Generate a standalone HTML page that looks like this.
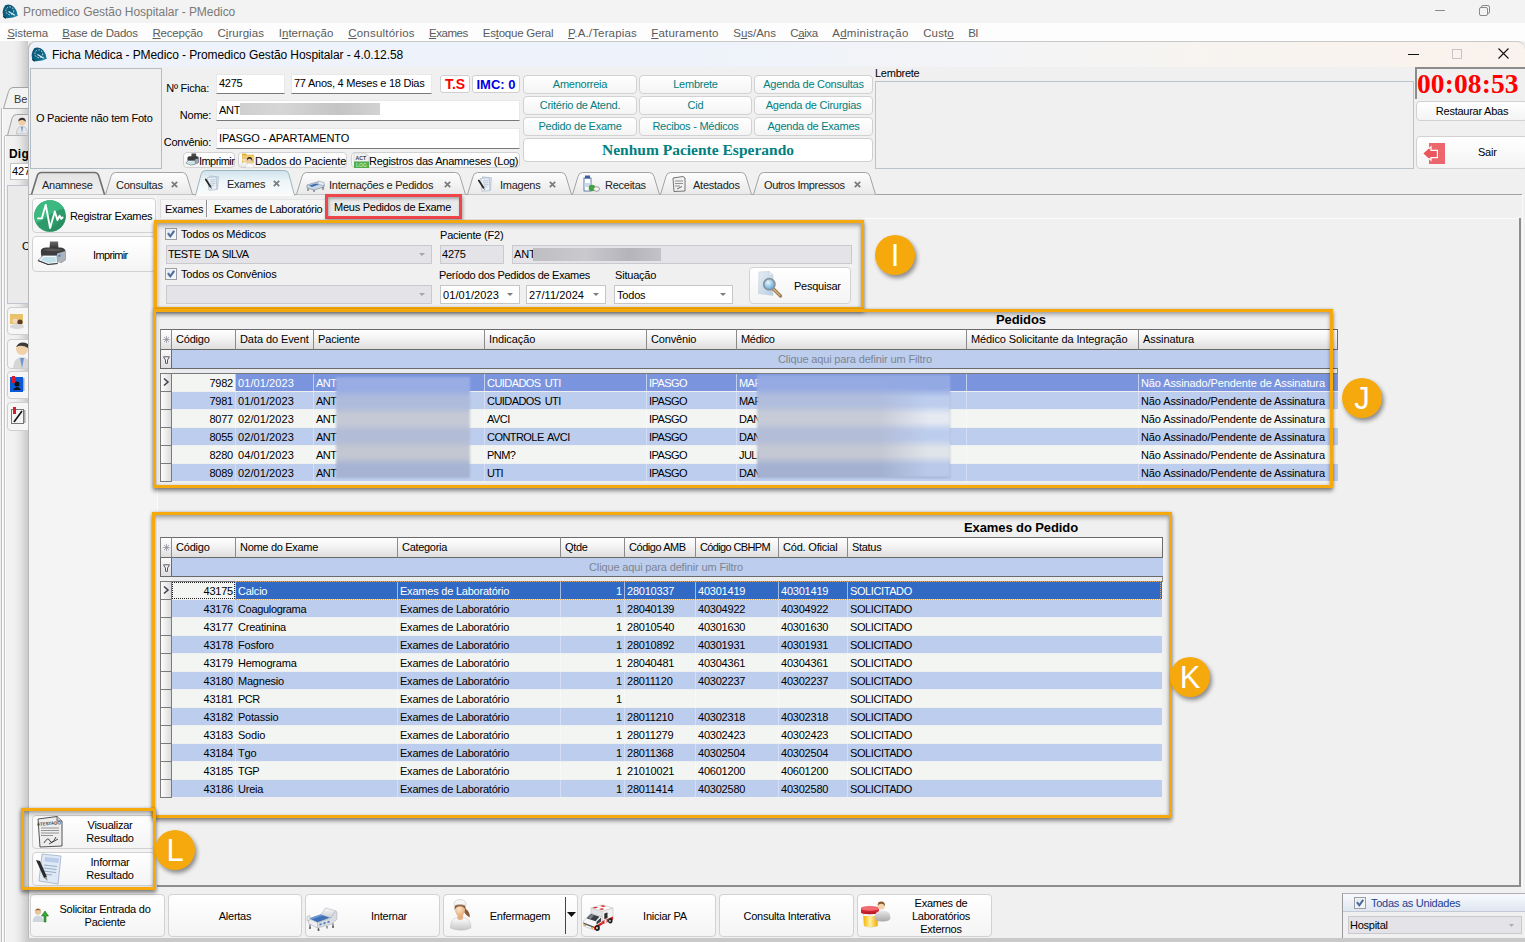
<!DOCTYPE html><html><head><meta charset="utf-8"><title>Promedico Gestão Hospitalar - PMedico</title><style>
*{box-sizing:border-box}
html,body{margin:0;padding:0}
body{width:1525px;height:942px;position:relative;overflow:hidden;background:#f0f0f0;
 font-family:"Liberation Sans",sans-serif;font-size:11px;color:#000;line-height:13px}
div{position:absolute}
svg{position:absolute;overflow:visible}
.t{font-size:11px;letter-spacing:-0.2px}
.ms{font-size:11px;letter-spacing:-0.25px}
.btn{background:linear-gradient(#ffffff,#f4f4f4);border:1px solid #d2d2d2;border-radius:4px}
.hdr{background:linear-gradient(#ffffff 0%,#f3f3f3 45%,#dedede 100%);border:1px solid #6a6a6a;border-left-color:#8a8a8a;padding:3px 0 0 4px;font-size:11px;letter-spacing:-0.3px;white-space:nowrap;overflow:hidden}
.cell{white-space:nowrap;overflow:hidden;font-size:11px;letter-spacing:-0.22px;line-height:18px;height:18px}
.orange{z-index:5;border:3px solid #f6a90c;box-shadow:0 3px 4px rgba(0,0,0,.42), 0 0 3px rgba(0,0,0,.2), inset 0 3px 4px rgba(0,0,0,.28), inset 0 0 3px rgba(0,0,0,.15)}
.circ{z-index:6;width:40px;height:40px;border-radius:50%;background:#f6a90c;box-shadow:2px 3px 4px rgba(0,0,0,.42);color:#fff;font-size:31px;line-height:41px;text-align:center;overflow:hidden}
.inp{background:#fff;border-bottom:1px solid #7a7a7a;border-top:1px solid #e8e8e8;border-left:1px solid #e8e8e8;border-right:1px solid #e8e8e8;padding:2px 0 0 2px;white-space:nowrap;overflow:hidden}
.dis{background:#e3e3e8;border:1px solid #c9c9ce;padding:2px 0 0 1px;white-space:nowrap;overflow:hidden}
.teal{color:#008080;text-align:center;line-height:17px}
.menu{font-size:12px;color:#5b5b5b;top:26px}
.menu u{text-decoration:underline}
</style></head><body>
<div style="left:0px;top:0px;width:1525px;height:23px;background:#f3f3f3"></div>
<svg style="left:2px;top:3.5px" width="16" height="16" viewBox="0 0 16 16"><defs><linearGradient id="lg2" x1="0" y1="0" x2="1" y2="1"><stop offset="0" stop-color="#0b4f6e"/><stop offset=".6" stop-color="#0e6686"/><stop offset="1" stop-color="#2391b5"/></linearGradient></defs><path d="M3.200 1.200 Q8.500 -.8 12.200 3.200 Q15.500 7 15.800 11.800 Q11 14.500 3.800 14.200 L1.200 12.200 Q-.5 6.500 3.200 1.200Z" fill="url(#lg2)"/><circle cx="7.800" cy="6.800" r="3.900" fill="none" stroke="#cfe6ee" stroke-width="1" stroke-dasharray="1.600 1.300"/><path d="M6.500 7.500 L12.800 11.200" stroke="#e6f3f7" stroke-width="1.100"/><path d="M1.300 12.300 L3.800 14.300" stroke="#072f42" stroke-width="1.300"/></svg>
<div style="left:23px;top:5px;white-space:nowrap;font-size:12px;color:#7a7a7a;line-height:15px;letter-spacing:-0.05px">Promedico Gestão Hospitalar - PMedico</div>
<div style="left:1435px;top:10px;width:10px;height:1px;background:#8a8a8a"></div>
<svg style="left:1479px;top:5px" width="11" height="11" viewBox="0 0 11 11"><rect x=".5" y="2.5" width="8" height="8" rx="1.5" fill="none" stroke="#8a8a8a"/><path d="M2.5 2.5 V2 a1.5 1.5 0 0 1 1.5 -1.5 H9 a1.5 1.5 0 0 1 1.5 1.5 V7 a1.5 1.5 0 0 1 -1.5 1.5" fill="none" stroke="#8a8a8a"/></svg>
<div style="left:0px;top:23px;width:1525px;height:18px;background:#fdfdfd"></div>
<div style="left:7.2px;top:26px;white-space:nowrap;font-size:11.500px;color:#5b5b5b;line-height:15px;letter-spacing:-0.08px"><u>S</u>istema</div>
<div style="left:62.3px;top:26px;white-space:nowrap;font-size:11.500px;color:#5b5b5b;line-height:15px;letter-spacing:-0.25px"><u>B</u>ase de Dados</div>
<div style="left:152.5px;top:26px;white-space:nowrap;font-size:11.500px;color:#5b5b5b;line-height:15px;letter-spacing:-0.2px"><u>R</u>ecepção</div>
<div style="left:217.4px;top:26px;white-space:nowrap;font-size:11.500px;color:#5b5b5b;line-height:15px;letter-spacing:0.06px">C<u>i</u>rurgias</div>
<div style="left:278.7px;top:26px;white-space:nowrap;font-size:11.500px;color:#5b5b5b;line-height:15px;letter-spacing:0.04px">I<u>n</u>ternação</div>
<div style="left:348.2px;top:26px;white-space:nowrap;font-size:11.500px;color:#5b5b5b;line-height:15px;letter-spacing:0.22px"><u>C</u>onsultórios</div>
<div style="left:428.9px;top:26px;white-space:nowrap;font-size:11.500px;color:#5b5b5b;line-height:15px;letter-spacing:-0.42px"><u>E</u>xames</div>
<div style="left:482.7px;top:26px;white-space:nowrap;font-size:11.500px;color:#5b5b5b;line-height:15px;letter-spacing:-0.22px">Es<u>t</u>oque Geral</div>
<div style="left:568px;top:26px;white-space:nowrap;font-size:11.500px;color:#5b5b5b;line-height:15px;letter-spacing:0.15px"><u>P</u>.A./Terapias</div>
<div style="left:651.2px;top:26px;white-space:nowrap;font-size:11.500px;color:#5b5b5b;line-height:15px;letter-spacing:0.21px"><u>F</u>aturamento</div>
<div style="left:733.3px;top:26px;white-space:nowrap;font-size:11.500px;color:#5b5b5b;line-height:15px;letter-spacing:-0.03px">S<u>u</u>s/Ans</div>
<div style="left:790.3px;top:26px;white-space:nowrap;font-size:11.500px;color:#5b5b5b;line-height:15px;letter-spacing:-0.42px">C<u>a</u>ixa</div>
<div style="left:832.2px;top:26px;white-space:nowrap;font-size:11.500px;color:#5b5b5b;line-height:15px;letter-spacing:0.27px">A<u>d</u>ministração</div>
<div style="left:923.2px;top:26px;white-space:nowrap;font-size:11.500px;color:#5b5b5b;line-height:15px;letter-spacing:0.13px">Cust<u>o</u></div>
<div style="left:968.2px;top:26px;white-space:nowrap;font-size:11.500px;color:#5b5b5b;line-height:15px;letter-spacing:-0.69px">BI</div>
<div style="left:0px;top:42px;width:28px;height:900px;background:#f0f0f0"></div>
<div style="left:1px;top:108px;width:27px;height:834px;background:#f3f3f3;border-left:1px solid #bdbdbd;box-shadow:inset 1px 0 0 #fdfdfd"></div>
<div style="left:4px;top:136px;width:24px;height:806px;background:#f1f1f1;border-left:1px solid #c6c6c6;box-shadow:inset 1px 0 0 #fbfbfb"></div>
<div style="left:14px;top:41px;width:14px;height:901px;background:linear-gradient(90deg,rgba(0,0,0,0),rgba(0,0,0,.04) 40%,rgba(0,0,0,.16))"></div>
<svg style="left:3px;top:86px" width="27" height="23" viewBox="0 0 27 23"><path d="M.5 22.500 L5.500 5.500 Q6.500 1.500 10 1.500 H27 V22.500 Z" fill="#f3f3f3" stroke="#a3a3a3"/></svg>
<div style="left:14px;top:93px;white-space:nowrap;font-size:11px;color:#333">Be</div>
<div style="left:3px;top:108px;width:26px;height:1px;background:#a9a9a9"></div>
<svg style="left:7px;top:113px" width="23" height="23" viewBox="0 0 23 23"><path d="M.5 22.500 L5 5.500 Q6 1.500 9.500 1.500 H23 V22.500 Z" fill="#ebebeb" stroke="#a3a3a3"/><path d="M9.500 21 Q9.500 13.500 15 13.500 Q20.500 13.500 20.500 21Z" fill="#e4e6ea" stroke="#9aa0a8" stroke-width=".5"/><path d="M14 14 L15 20 L16 14Z" fill="#6d93cc"/><circle cx="15" cy="9" r="3.600" fill="#efcfa8"/><path d="M11.300 8.500 Q11.500 4.500 15.500 4.800 Q19 5 18.600 9 Q17.500 6.800 15 7 Q12.500 6.800 11.300 8.500Z" fill="#3a3230"/></svg>
<div style="left:5px;top:135px;width:24px;height:1px;background:#b5b5b5"></div>
<div style="left:9px;top:148px;white-space:nowrap;font-weight:bold;font-size:12px;letter-spacing:.2px">Dig</div>
<div style="left:10px;top:163px;width:20px;height:17px;background:#fff;border:1px solid #c4c4c4"></div>
<div style="left:12px;top:165px;white-space:nowrap;font-size:11px">427</div>
<div style="left:7px;top:185px;width:23px;height:119px;background:#eaeaea;border:1px solid #bfc5d0"></div>
<div style="left:22px;top:240px;white-space:nowrap;font-size:11px">C</div>
<div style="left:7px;top:307px;width:24px;height:28px;background:#f6f6f6;border:1px solid #cfcfcf;border-radius:4px"></div>
<div style="left:7px;top:339px;width:24px;height:30px;background:#f6f6f6;border:1px solid #cfcfcf;border-radius:4px"></div>
<div style="left:7px;top:371px;width:24px;height:28px;background:#f6f6f6;border:1px solid #cfcfcf;border-radius:4px"></div>
<div style="left:7px;top:402px;width:24px;height:29px;background:#f6f6f6;border:1px solid #cfcfcf;border-radius:4px"></div>
<svg style="left:9px;top:312px" width="18" height="18" viewBox="0 0 18 18"><rect x="1" y="2" width="13" height="10" fill="#e9c36a"/><circle cx="6" cy="9" r="2.6" fill="#f1d7b8"/><circle cx="11" cy="10" r="2.6" fill="#5a4030"/><ellipse cx="8" cy="14.5" rx="7" ry="2.5" fill="#d9d9d9"/></svg>
<svg style="left:12px;top:340px" width="18" height="30" viewBox="0 0 18 30"><circle cx="10" cy="9" r="6" fill="#f0d0a8"/><path d="M4 7 Q8 0 16 4 L16 8 Q10 4 4 7Z" fill="#3a3a3a"/><path d="M1 28 Q2 17 10 17 Q18 17 18 28Z" fill="#d6d6d6"/><path d="M8 18 L10 28 L12 18Z" fill="#6b95d0"/></svg>
<svg style="left:10px;top:376px" width="15" height="18" viewBox="0 0 15 18"><rect x="0" y="1" width="13" height="15" fill="#0a5ad8"/><rect x="2" y="0" width="3" height="7" fill="#d91a2a"/><circle cx="7" cy="8" r="2.5" fill="#111"/><path d="M3 14 Q7 8 11 14Z" fill="#111"/><rect x="13" y="2" width="1.5" height="13" fill="#aaa"/></svg>
<svg style="left:11px;top:407px" width="15" height="18" viewBox="0 0 15 18"><rect x="0.5" y="2.500" width="12" height="14" fill="#f4f4f4" stroke="#777"/><rect x="2" y="0" width="3" height="7" fill="#d91a2a"/><path d="M3 15 L11 4" stroke="#111" stroke-width="1.6"/><rect x="13" y="3" width="1.5" height="13" fill="#aaa"/></svg>
<div style="left:28px;top:41px;width:1497px;height:901px;background:#f0f0f0;border-left:1px solid #b8b8b8;border-top-left-radius:8px;border-top-right-radius:8px"></div>
<div style="left:28px;top:41px;width:1497px;height:26px;background:linear-gradient(90deg,#eef2fb 0%,#eef2fa 45%,#f3f4f7 63%,#f7f4f1 78%,#faf2ec 100%);border-top-left-radius:8px;border-top-right-radius:8px;border-top:1px solid #c9c9c9;border-left:1px solid #b8b8b8"></div>
<svg style="left:31px;top:46.5px" width="16" height="16" viewBox="0 0 16 16"><defs><linearGradient id="lg31" x1="0" y1="0" x2="1" y2="1"><stop offset="0" stop-color="#0b4f6e"/><stop offset=".6" stop-color="#0e6686"/><stop offset="1" stop-color="#2391b5"/></linearGradient></defs><path d="M3.200 1.200 Q8.500 -.8 12.200 3.200 Q15.500 7 15.800 11.800 Q11 14.500 3.800 14.200 L1.200 12.200 Q-.5 6.500 3.200 1.200Z" fill="url(#lg31)"/><circle cx="7.800" cy="6.800" r="3.900" fill="none" stroke="#cfe6ee" stroke-width="1" stroke-dasharray="1.600 1.300"/><path d="M6.500 7.500 L12.800 11.200" stroke="#e6f3f7" stroke-width="1.100"/><path d="M1.300 12.300 L3.800 14.300" stroke="#072f42" stroke-width="1.300"/></svg>
<div style="left:52px;top:48px;white-space:nowrap;font-size:12px;line-height:15px;letter-spacing:-0.09px">Ficha Médica - PMedico - Promedico Gestão Hospitalar - 4.0.12.58</div>
<div style="left:1408px;top:54px;width:11px;height:1px;background:#111"></div>
<div style="left:1452px;top:49px;width:10px;height:10px;border:1px solid #c4c4c4"></div>
<svg style="left:1498px;top:48px" width="11" height="11" viewBox="0 0 11 11"><path d="M0.5 .5 L10.5 10.500 M10.5 .5 L.5 10.5" stroke="#111" stroke-width="1.1"/></svg>
<div style="left:30px;top:68px;width:132px;height:101px;border:1px solid #b3bdca;background:#f0f0f0"></div>
<div class="ms" style="left:36px;top:112px;white-space:nowrap;">O Paciente não tem Foto</div>
<div class="ms" style="left:129px;top:82px;width:80px;text-align:right;white-space:nowrap">Nº Ficha:</div>
<div class="ms" style="left:131px;top:109px;width:80px;text-align:right;white-space:nowrap">Nome:</div>
<div class="ms" style="left:131px;top:136px;width:80px;text-align:right;white-space:nowrap">Convênio:</div>
<div class="inp ms" style="left:216px;top:74px;width:69px;height:20px;">4275</div>
<div class="inp ms" style="left:291px;top:74px;width:141px;height:20px;">77 Anos, 4 Meses e 18 Dias</div>
<div style="left:440px;top:75px;width:30px;height:18px;background:#fff;border:1px solid #cfcfcf;border-radius:3px;color:#f00;font-weight:bold;font-size:14px;line-height:17px;text-align:center">T.S</div>
<div style="left:472px;top:75px;width:48px;height:18px;background:#fff;border:1px solid #cfcfcf;border-radius:3px;color:#0000e6;font-weight:bold;font-size:13px;line-height:17px;text-align:center;white-space:nowrap">IMC: 0</div>
<div class="inp ms" style="left:216px;top:100px;width:304px;height:21px;padding-top:3px">ANT</div>
<div style="left:240px;top:103px;width:140px;height:12px;background:linear-gradient(90deg,#cfcfcf,#d6d6d6 30%,#c4c4c4 70%,#d2d2d2)"></div>
<div class="inp ms" style="left:216px;top:128px;width:304px;height:21px;padding-top:3px;letter-spacing:-0.1px">IPASGO - APARTAMENTO</div>
<div class="btn" style="left:183px;top:152px;width:52px;height:16px;"></div>
<div class="ms" style="left:199px;top:155px;white-space:nowrap;letter-spacing:-0.55px">Imprimir</div>
<svg style="left:185px;top:153px" width="14" height="13" viewBox="0 0 14 13"><path d="M6.500 .5 H11 L11.300 4 H6.300Z" fill="#4a4a4a"/><path d="M2.500 4.500 Q3 3.300 5 3.300 H12 Q13.600 3.500 13.700 5 V9.500 L11.500 11 L9.800 8.500 H3 Q2.200 6.500 2.500 4.500Z" fill="#3a3a3a"/><path d="M9.800 6.500 L13.700 5.300 V9.500 L11.500 11 L9.800 10.500Z" fill="#9aa3ab"/><path d="M3.500 7.500 H10 L10.200 11.300 L5.500 12 L.8 10Z" fill="#eef4f7" stroke="#59626a" stroke-width=".6"/><path d="M4 8.500 H9.300 L9.500 10.600 L5.500 11.200 L2.500 9.800Z" fill="#bfe1ea"/></svg>
<div class="btn" style="left:238px;top:152px;width:109px;height:16px;"></div>
<div class="ms" style="left:255px;top:155px;white-space:nowrap;letter-spacing:-0.1px">Dados do Paciente</div>
<svg style="left:240px;top:152px" width="15" height="16" viewBox="0 0 15 16"><path d="M2 1.500 H6 L7 2.800 H14 V11 H2Z" fill="#e3b044"/><path d="M2.500 3.500 H14.500 L13.500 11.500 H2Z" fill="#f3cf6e"/><circle cx="4.800" cy="7.300" r="2.300" fill="#f3dcc0"/><path d="M2.500 6.800 Q4.800 3.500 7.100 6.800 Q4.800 5.600 2.500 6.800Z" fill="#caa04a"/><path d="M1 14.500 Q1.300 10 4.800 10 Q8 10 8.500 14.500Z" fill="#f2f2f2" stroke="#c8c8c8" stroke-width=".4"/><circle cx="9.600" cy="8.300" r="2.500" fill="#e9c9a6"/><path d="M6.900 9 Q6.500 4.800 9.600 5 Q12.700 4.800 12.300 9.500 Q11.500 6.500 9.600 6.800 Q7.500 6.500 6.900 9Z" fill="#3a2a20"/><path d="M5.500 15.800 Q6 11.200 9.600 11.200 Q13.200 11.200 13.800 15.800Z" fill="#fafafa" stroke="#c0c0c0" stroke-width=".4"/></svg>
<div class="btn" style="left:351px;top:152px;width:169px;height:16px;"></div>
<div class="ms" style="left:369px;top:155px;white-space:nowrap;">Registros das Anamneses (Log)</div>
<svg style="left:354px;top:153px" width="15" height="15" viewBox="0 0 15 15"><path d="M0 0 H11.500 L15 3 V9 H0Z" fill="#f1f1f1" stroke="#c2c2c2" stroke-width=".5"/><path d="M11.500 0 V3 H15Z" fill="#dcdcdc"/><rect x="0" y="8.500" width="15" height="6.500" fill="#4fae4b"/><text x="6.800" y="6.600" font-size="5.200" font-weight="bold" text-anchor="middle" fill="#444" font-family="Liberation Sans,sans-serif">ACT</text><text x="7.500" y="14" font-size="5.200" font-weight="bold" text-anchor="middle" fill="#b9e6b6" font-family="Liberation Sans,sans-serif">LOG</text></svg>
<div class="btn teal ms" style="left:523px;top:75px;width:114px;height:19px;">Amenorreia</div>
<div class="btn teal ms" style="left:523px;top:96px;width:114px;height:19px;">Critério de Atend.</div>
<div class="btn teal ms" style="left:523px;top:117px;width:114px;height:19px;">Pedido de Exame</div>
<div class="btn teal ms" style="left:639px;top:75px;width:113px;height:19px;">Lembrete</div>
<div class="btn teal ms" style="left:639px;top:96px;width:113px;height:19px;">Cid</div>
<div class="btn teal ms" style="left:639px;top:117px;width:113px;height:19px;">Recibos - Médicos</div>
<div class="btn teal ms" style="left:754px;top:75px;width:119px;height:19px;">Agenda de Consultas</div>
<div class="btn teal ms" style="left:754px;top:96px;width:119px;height:19px;">Agenda de Cirurgias</div>
<div class="btn teal ms" style="left:754px;top:117px;width:119px;height:19px;">Agenda de Exames</div>
<div style="left:523px;top:138px;width:350px;height:24px;background:#fff;border:1px solid #d0d0d0;border-radius:4px;text-align:center;font-family:'Liberation Serif',serif;font-weight:bold;font-size:15.5px;line-height:22px;color:#008080">Nenhum Paciente Esperando</div>
<div class="ms" style="left:875px;top:67px;white-space:nowrap;">Lembrete</div>
<div style="left:875px;top:81px;width:539px;height:88px;background:#f0f0f0;border:1px solid #bcc3cc"></div>
<div style="left:1415px;top:67px;width:110px;height:32px;border-left:2px solid #8c8c8c;border-top:2px solid #8c8c8c;background:#f0f0f0"></div>
<div style="left:1417px;top:68px;white-space:nowrap;font-family:'Liberation Serif',serif;font-weight:bold;font-size:27.500px;line-height:31px;color:#f00;letter-spacing:.1px">00:08:53</div>
<div class="btn ms" style="left:1416px;top:101px;width:112px;height:20px;text-align:center;line-height:18px">Restaurar Abas</div>
<div class="btn" style="left:1416px;top:136px;width:112px;height:33px;"></div>
<div class="ms" style="left:1478px;top:146px;white-space:nowrap;">Sair</div>
<svg style="left:1422px;top:142px" width="24" height="23" viewBox="0 0 24 23"><rect x="7" y="1" width="16" height="21" fill="#ec676c"/><path d="M1.300 11.400 L9 4.700 V8.400 H15.400 V15.700 H9 V18.100Z" fill="#e9565c" stroke="#fff" stroke-width="1.200" stroke-linejoin="miter"/><path d="M1.300 11.400 L7 6.400 V16.500Z" fill="#e9565c"/></svg>
<svg style="left:0;top:0" width="1525" height="200" viewBox="0 0 1525 200"><defs><linearGradient id="tg" x1="0" y1="0" x2="0" y2="1"><stop offset="0" stop-color="#fdfdfd"/><stop offset="1" stop-color="#e9e9e9"/></linearGradient><linearGradient id="ta" x1="0" y1="0" x2="0" y2="1"><stop offset="0" stop-color="#cfe3ec"/><stop offset=".45" stop-color="#eef6f9"/><stop offset="1" stop-color="#fbfbfb"/></linearGradient><linearGradient id="tp" x1="0" y1="0" x2="0" y2="1"><stop offset="0" stop-color="#e2e2e2"/><stop offset="1" stop-color="#f2f2f2"/></linearGradient></defs>
<path d="M29 194.5 H1522" stroke="#a3a3a3"/>
<path d="M105.5 194.5 L111.0 176.5 Q112.0 172.5 115.5 172.5 H182.5 Q186.0 172.5 187.0 176.5 L192.5 194.5" fill="url(#tg)" stroke="#a3a3a3" stroke-width="1"/>
<path d="M296.5 194.5 L302.0 176.5 Q303.0 172.5 306.5 172.5 H455.5 Q459.0 172.5 460.0 176.5 L465.5 194.5" fill="url(#tg)" stroke="#a3a3a3" stroke-width="1"/>
<path d="M467.5 194.5 L473.0 176.5 Q474.0 172.5 477.5 172.5 H561.5 Q565.0 172.5 566.0 176.5 L571.5 194.5" fill="url(#tg)" stroke="#a3a3a3" stroke-width="1"/>
<path d="M572.5 194.5 L578.0 176.5 Q579.0 172.5 582.5 172.5 H649.5 Q653.0 172.5 654.0 176.5 L659.5 194.5" fill="url(#tg)" stroke="#a3a3a3" stroke-width="1"/>
<path d="M660.5 194.5 L666.0 176.5 Q667.0 172.5 670.5 172.5 H741.5 Q745.0 172.5 746.0 176.5 L751.5 194.5" fill="url(#tg)" stroke="#a3a3a3" stroke-width="1"/>
<path d="M753.5 194.5 L759.0 176.5 Q760.0 172.5 763.5 172.5 H865.5 Q869.0 172.5 870.0 176.5 L875.5 194.5" fill="url(#tg)" stroke="#a3a3a3" stroke-width="1"/>
<path d="M31.5 194.5 L37.0 176.5 Q38.0 172.5 41.5 172.5 H94.5 Q98.0 172.5 99.0 176.5 L104.5 194.5" fill="url(#tp)" stroke="#6f6f6f" stroke-width="1.6"/>
<path d="M195.5 195.5 L201.0 174.5 Q202.0 170.5 205.5 170.5 H284.5 Q288.0 170.5 289.0 174.5 L294.5 195.5" fill="url(#ta)" stroke="#9fb5bf" stroke-width="1"/>
<path d="M196.5 195 H293.500" stroke="#fbfbfb" stroke-width="2"/>
</svg>
<div class="ms" style="left:42px;top:179px;white-space:nowrap;color:#222">Anamnese</div>
<div class="ms" style="left:116px;top:179px;white-space:nowrap;color:#222">Consultas</div>
<svg style="left:171px;top:181px" width="7" height="7" viewBox="0 0 7 7"><path d="M.8 .8 L6.200 6.200 M6.200 .8 L.8 6.200" stroke="#7a7a7a" stroke-width="1.700"/></svg>
<div class="ms" style="left:227px;top:178px;white-space:nowrap;color:#222">Exames</div>
<svg style="left:273px;top:179.5px" width="7" height="7" viewBox="0 0 7 7"><path d="M.8 .8 L6.200 6.200 M6.200 .8 L.8 6.200" stroke="#7a7a7a" stroke-width="1.700"/></svg>
<div class="ms" style="left:329px;top:179px;white-space:nowrap;color:#222">Internações e Pedidos</div>
<svg style="left:444px;top:181px" width="7" height="7" viewBox="0 0 7 7"><path d="M.8 .8 L6.200 6.200 M6.200 .8 L.8 6.200" stroke="#7a7a7a" stroke-width="1.700"/></svg>
<div class="ms" style="left:500px;top:179px;white-space:nowrap;color:#222">Imagens</div>
<svg style="left:549px;top:181px" width="7" height="7" viewBox="0 0 7 7"><path d="M.8 .8 L6.200 6.200 M6.200 .8 L.8 6.200" stroke="#7a7a7a" stroke-width="1.700"/></svg>
<div class="ms" style="left:605px;top:179px;white-space:nowrap;color:#222">Receitas</div>
<div class="ms" style="left:693px;top:179px;white-space:nowrap;color:#222">Atestados</div>
<div class="ms" style="left:764px;top:179px;white-space:nowrap;color:#222;letter-spacing:-0.38px">Outros Impressos</div>
<svg style="left:854px;top:181px" width="7" height="7" viewBox="0 0 7 7"><path d="M.8 .8 L6.200 6.200 M6.200 .8 L.8 6.200" stroke="#7a7a7a" stroke-width="1.700"/></svg>
<svg style="left:205px;top:174.5px" width="15" height="16" viewBox="0 0 15 16"><path d="M4.500 .8 L13.500 1.800 L12.500 14 L3.500 13Z" fill="#d3dfec" stroke="#a9b8c9" stroke-width=".6"/><path d="M2.500 2.500 L11 1.800 L12 14.500 L4 15.300Z" fill="#e9f0f7" stroke="#9fb0c3" stroke-width=".6"/><path d="M5 5 L10 4.600 M5.200 7 L10.200 6.600 M5.400 9 L10.400 8.600 M5.600 11 L9 10.700" stroke="#a5b5c8" stroke-width=".7"/><path d="M.8 4.500 L5.500 11.800" stroke="#222" stroke-width="1.700" stroke-linecap="round"/><path d="M5.500 11.800 L6.800 13.800" stroke="#777" stroke-width="1"/></svg>
<svg style="left:478px;top:175.5px" width="15" height="16" viewBox="0 0 15 16"><path d="M4.500 .8 L13.500 1.800 L12.500 14 L3.500 13Z" fill="#d3dfec" stroke="#a9b8c9" stroke-width=".6"/><path d="M2.500 2.500 L11 1.800 L12 14.500 L4 15.300Z" fill="#e9f0f7" stroke="#9fb0c3" stroke-width=".6"/><path d="M5 5 L10 4.600 M5.200 7 L10.200 6.600 M5.400 9 L10.400 8.600 M5.600 11 L9 10.700" stroke="#a5b5c8" stroke-width=".7"/><path d="M.8 4.500 L5.500 11.800" stroke="#222" stroke-width="1.700" stroke-linecap="round"/><path d="M5.500 11.800 L6.800 13.800" stroke="#777" stroke-width="1"/></svg>
<svg style="left:306px;top:178px" width="19" height="14" viewBox="0 0 19 14"><path d="M1 7 L11 4 L18 6 L18 9 L8 12 L1 10Z" fill="#c9d6e6" stroke="#7d8da3" stroke-width=".7"/><path d="M3 7.500 L10 5.500 L13 6.500 L6 9Z" fill="#3f6fb0"/><path d="M12 3 L18 4.500 V8 L12 6Z" fill="#e8eef5" stroke="#8a98aa" stroke-width=".6"/><path d="M2 10.500 V13 M8 12 V14 M17 9 V12" stroke="#555" stroke-width="1"/></svg>
<svg style="left:583px;top:175px" width="17" height="18" viewBox="0 0 17 18"><rect x="1" y="3" width="7" height="13" fill="#fff" stroke="#3b5f9a" stroke-width=".8"/><rect x="2" y="0.500" width="5" height="3" fill="#3b5f9a"/><rect x="1.500" y="8" width="6" height="4" fill="#c8d8ee"/><circle cx="9" cy="13" r="3.300" fill="#3fa33f"/><ellipse cx="13.500" cy="14" rx="3" ry="2.300" fill="#f4f4f4" stroke="#777" stroke-width=".7"/></svg>
<svg style="left:672px;top:176px" width="14" height="16" viewBox="0 0 14 16"><path d="M1 2 L11 .5 L13 2 V15 L2 15.500Z" fill="#f1f1f1" stroke="#666" stroke-width=".9"/><path d="M3 5 H11 M3 7.500 H11 M3 10 H8" stroke="#777" stroke-width=".8"/><path d="M5 13 L10 10.500" stroke="#444" stroke-width=".8"/></svg>
<div style="left:29px;top:195px;width:128px;height:694px;background:#f4f4f4"></div>
<div style="left:157px;top:218px;width:1px;height:592px;background:#fbfbfb"></div>
<div style="left:158px;top:218px;width:1362px;height:1px;background:#fbfbfb"></div>
<div style="left:1519px;top:218px;width:2px;height:668px;background:#8d8d8d"></div>
<div style="left:157px;top:885px;width:1364px;height:2px;background:#8d8d8d"></div>
<div style="left:1522px;top:195px;width:1px;height:695px;background:#fafafa"></div>
<div class="btn" style="left:32px;top:198px;width:124px;height:35px;"></div>
<svg style="left:34px;top:200px" width="32" height="32" viewBox="0 0 32 32"><defs><clipPath id="gc"><circle cx="16" cy="16" r="15.800"/></clipPath></defs><circle cx="16" cy="16" r="15.800" fill="#2e9a69"/><g clip-path="url(#gc)"><path d="M-2 -2 H34 V8 Q22 9 14 16 Q7 22 -2 24Z" fill="#3cb881"/><path d="M8 32 Q20 30 32 14 V34 H8Z" fill="#27875b" opacity=".6"/></g><path d="M4 18.400 H7.800 L11.700 4.800 L16.100 28 L20.800 11.500 L23.400 20 L25.600 15.800 L27.300 18.800 L28.600 17.500" fill="none" stroke="#fbfffd" stroke-width="1.900" stroke-linejoin="round" stroke-linecap="round"/></svg>
<div class="ms" style="left:70px;top:210px;white-space:nowrap;letter-spacing:-0.33px">Registrar Exames</div>
<div class="btn" style="left:32px;top:236px;width:124px;height:36px;"></div>
<div class="ms" style="left:93px;top:248.5px;white-space:nowrap;letter-spacing:-0.65px">Imprimir</div>
<svg style="left:34px;top:241px" width="30" height="24" viewBox="0 0 30 24"><defs><linearGradient id="pr1" x1="0" y1="0" x2="0" y2="1"><stop offset="0" stop-color="#6a6a6a"/><stop offset="1" stop-color="#2e2e2e"/></linearGradient></defs><path d="M16 .5 H24 L24.500 8 H15.500Z" fill="url(#pr1)"/><path d="M7 9 Q8 6.500 12 6.500 H27 Q31 7 31.500 10 V19 L27 22 L23 16.500 H8 Q6.500 13 7 9Z" fill="#3d3d3d"/><path d="M9 9 Q16 6 29 9 Q22 11.500 9 9Z" fill="#5a5a5a"/><path d="M23 12.500 L31.500 10 V19 L27 22 L23 21Z" fill="#aab3bb"/><path d="M24.500 14 L26.500 13.500 V15.500 L24.500 16Z" fill="#3a78d8"/><path d="M9 14.500 H23 L23.500 22.500 L14 23.500 L4 19.500Z" fill="#f4f8fa" stroke="#7a8288" stroke-width=".7"/><path d="M10 16 H21.500 L22 21 L14 22 L7 19Z" fill="#bfe1ea"/><path d="M4 19.500 L14 23.500 L23.500 22.500" fill="none" stroke="#333" stroke-width="1.200"/></svg>
<div style="left:160px;top:199px;width:166px;height:19px;background:#f5f5f5;border-left:1px solid #dcdcdc;border-top:1px solid #e6e6e6"></div>
<div class="ms" style="left:165px;top:203px;white-space:nowrap;">Exames</div>
<div style="left:206px;top:200px;width:1px;height:17px;background:#8f8f8f"></div>
<div style="left:207px;top:200px;width:1px;height:17px;background:#fdfdfd"></div>
<div class="ms" style="left:214px;top:203px;white-space:nowrap;">Exames de Laboratório</div>
<div style="left:325px;top:194px;width:137px;height:25px;border:3px solid #ef444a;background:#e9e9e9;box-shadow:1px 2px 3px rgba(0,0,0,.3), inset 1px 2px 3px rgba(0,0,0,.28);z-index:5"></div>
<div class="ms" style="left:334px;top:201px;white-space:nowrap;z-index:6">Meus Pedidos de Exame</div>
<div class="orange" style="left:154px;top:220px;width:710px;height:90px;"></div>
<div style="left:165px;top:228px;width:12px;height:12px;background:linear-gradient(135deg,#dfe5ee,#f8f9fb);border:1px solid #9a9ea4;box-shadow:inset 0 0 0 1px #f4f4f4"></div>
<svg style="left:167px;top:230px" width="8" height="8" viewBox="0 0 8 8"><path d="M.9 3.200 L3.300 6.300 L7.200 .9" fill="none" stroke="#4a6a9e" stroke-width="2"/></svg>
<div class="t" style="left:181px;top:228px;white-space:nowrap;">Todos os Médicos</div>
<div class="dis t" style="left:166px;top:245px;width:266px;height:19px;letter-spacing:-0.6px;word-spacing:1.500px">TESTE DA SILVA</div>
<svg style="left:419px;top:253px" width="6" height="3" viewBox="0 0 6 3"><path d="M0 0 H6 L3 3Z" fill="#a5a5a5"/></svg>
<div style="left:165px;top:268px;width:12px;height:12px;background:linear-gradient(135deg,#dfe5ee,#f8f9fb);border:1px solid #9a9ea4;box-shadow:inset 0 0 0 1px #f4f4f4"></div>
<svg style="left:167px;top:270px" width="8" height="8" viewBox="0 0 8 8"><path d="M.9 3.200 L3.300 6.300 L7.200 .9" fill="none" stroke="#4a6a9e" stroke-width="2"/></svg>
<div class="t" style="left:181px;top:268px;white-space:nowrap;">Todos os Convênios</div>
<div class="dis t" style="left:166px;top:285px;width:266px;height:19px;"></div>
<svg style="left:419px;top:293px" width="6" height="3" viewBox="0 0 6 3"><path d="M0 0 H6 L3 3Z" fill="#a5a5a5"/></svg>
<div class="t" style="left:440px;top:229px;white-space:nowrap;">Paciente (F2)</div>
<div class="dis t" style="left:440px;top:245px;width:64px;height:19px;">4275</div>
<div class="dis t" style="left:512px;top:245px;width:340px;height:19px;">ANT</div>
<div style="left:533px;top:248px;width:128px;height:13px;background:linear-gradient(90deg,#bdbdc2,#c9c9ce 40%,#b4b4ba 75%,#c2c2c8)"></div>
<div class="t" style="left:439px;top:269px;white-space:nowrap;letter-spacing:-0.32px">Período dos Pedidos de Exames</div>
<div class="t" style="left:615px;top:269px;white-space:nowrap;">Situação</div>
<div class="t" style="left:440px;top:285px;width:80px;height:19px;background:#fff;border:1px solid #c6c6c6;padding:3px 0 0 2px;white-space:nowrap"><span style="letter-spacing:.08px">01/01/2023</span></div>
<svg style="left:507px;top:293px" width="6" height="3" viewBox="0 0 6 3"><path d="M0 0 H6 L3 3Z" fill="#7c7c7c"/></svg>
<div class="t" style="left:526px;top:285px;width:80px;height:19px;background:#fff;border:1px solid #c6c6c6;padding:3px 0 0 2px;white-space:nowrap"><span style="letter-spacing:.08px">27/11/2024</span></div>
<svg style="left:593px;top:293px" width="6" height="3" viewBox="0 0 6 3"><path d="M0 0 H6 L3 3Z" fill="#7c7c7c"/></svg>
<div class="t" style="left:614px;top:285px;width:119px;height:19px;background:#fff;border:1px solid #c6c6c6;padding:3px 0 0 2px;white-space:nowrap">Todos</div>
<svg style="left:720px;top:293px" width="6" height="3" viewBox="0 0 6 3"><path d="M0 0 H6 L3 3Z" fill="#7c7c7c"/></svg>
<div class="btn" style="left:749px;top:267px;width:102px;height:37px;"></div>
<div class="ms" style="left:794px;top:280px;white-space:nowrap;">Pesquisar</div>
<svg style="left:756px;top:270px" width="30" height="30" viewBox="0 0 30 30"><defs><linearGradient id="dg" x1="0" y1="0" x2="1" y2="1"><stop offset="0" stop-color="#e4edf5"/><stop offset="1" stop-color="#b9cee2"/></linearGradient><radialGradient id="lens" cx=".4" cy=".35" r=".7"><stop offset="0" stop-color="#e8f6fd"/><stop offset=".6" stop-color="#8cc3e6"/><stop offset="1" stop-color="#5f9fcc"/></radialGradient></defs><path d="M3 2 L13 1.500 L17 5 V25.500 L2.500 23.500Z" fill="url(#dg)" stroke="#c3d0dc" stroke-width=".6"/><path d="M13 1.500 V5 H17Z" fill="#f4f8fb" stroke="#b4c2cf" stroke-width=".4"/><path d="M17.500 19 L24.500 26" stroke="#9a7a4e" stroke-width="3.200" stroke-linecap="round"/><path d="M17.500 19 L23.800 25.300" stroke="#d9b77e" stroke-width="1.200" stroke-linecap="round"/><circle cx="13.300" cy="14.300" r="5.600" fill="url(#lens)" stroke="#8a939c" stroke-width="1.700"/></svg>
<div class="circ" style="left:875px;top:235px;width:40px;height:40px;">I</div>
<div class="orange" style="left:153px;top:309px;width:1180px;height:179px;"></div>
<div class="hdr" style="left:160px;top:329px;width:12px;height:21px;padding:0"></div>
<svg style="left:163px;top:336px" width="7" height="7" viewBox="0 0 7 7"><path d="M3.500 0 V7 M0 3.500 H7 M1 1 L6 6 M6 1 L1 6" stroke="#8a8a9a" stroke-width=".7"/></svg>
<div class="hdr" style="left:171px;top:329px;width:65px;height:21px;letter-spacing:-0.2px">Código</div>
<div class="hdr" style="left:235px;top:329px;width:79px;height:21px;letter-spacing:-0.08px">Data do Event</div>
<div class="hdr" style="left:313px;top:329px;width:172px;height:21px;letter-spacing:-0.15px">Paciente</div>
<div class="hdr" style="left:484px;top:329px;width:163px;height:21px;letter-spacing:-0.1px">Indicação</div>
<div class="hdr" style="left:646px;top:329px;width:91px;height:21px;letter-spacing:-0.15px">Convênio</div>
<div class="hdr" style="left:736px;top:329px;width:231px;height:21px;">Médico</div>
<div class="hdr" style="left:966px;top:329px;width:173px;height:21px;letter-spacing:-0.1px">Médico Solicitante da Integração</div>
<div class="hdr" style="left:1138px;top:329px;width:200px;height:21px;letter-spacing:-0.1px">Assinatura</div>
<div style="left:160px;top:350px;width:12px;height:19px;background:linear-gradient(#fafafa,#dedede);border:1px solid #6a6a6a;border-top:none"></div>
<svg style="left:163px;top:356px" width="7" height="8" viewBox="0 0 7 8"><path d="M.5 .8 H6.500 L4.500 4 V7.300 H2.500 V4Z" fill="#f4f4f4" stroke="#4a4a5a" stroke-width=".9"/></svg>
<div style="left:172px;top:350px;width:1166px;height:18px;background:#bccdee"></div>
<div class="t" style="left:755px;top:353px;width:200px;text-align:center;color:#7d8593;white-space:nowrap;letter-spacing:-0.15px">Clique aqui para definir um Filtro</div>
<div style="left:172px;top:368px;width:1166px;height:6px;background:#e9ebee;border-top:1px solid #6a6a6a;border-bottom:1px solid #7a7a7a;border-right:1px solid #8a8a8a"></div>
<div style="left:160px;top:373px;width:12px;height:19px;background:linear-gradient(90deg,#fdfdfd,#dcdcdc);border:1px solid #7b7b7b"></div>
<svg style="left:163px;top:378px" width="6" height="8" viewBox="0 0 6 8"><path d="M1 .5 L5 4 L1 7.500" fill="none" stroke="#3c3c4a" stroke-width="1.500"/></svg>
<div style="left:172px;top:374px;width:1166px;height:17px;background:#7a95de"></div>
<div style="left:172px;top:374px;width:63px;height:17px;background:#f3f5f3"></div>
<div class="cell" style="left:172px;top:374px;width:62px;text-align:right;padding-right:1px;color:#000">7982</div>
<div class="cell" style="left:236px;top:374px;width:76px;text-align:left;padding-left:2px;color:#fff;letter-spacing:0.08px">01/01/2023</div>
<div class="cell" style="left:314px;top:374px;width:169px;text-align:left;padding-left:2px;color:#fff;letter-spacing:-0.55px;word-spacing:1.500px">ANT</div>
<div class="cell" style="left:485px;top:374px;width:160px;text-align:left;padding-left:2px;color:#fff;letter-spacing:-0.55px;word-spacing:1.500px">CUIDADOS UTI</div>
<div class="cell" style="left:647px;top:374px;width:88px;text-align:left;padding-left:2px;color:#fff;letter-spacing:-0.55px;word-spacing:1.500px">IPASGO</div>
<div class="cell" style="left:737px;top:374px;width:228px;text-align:left;padding-left:2px;color:#fff;letter-spacing:-0.55px;word-spacing:1.500px">MAR</div>
<div class="cell" style="left:1139px;top:374px;width:197px;text-align:left;padding-left:2px;color:#fff;letter-spacing:-0.11px">Não Assinado/Pendente de Assinatura</div>
<div style="left:235px;top:374px;width:1px;height:17px;background:rgba(255,255,255,.55)"></div>
<div style="left:313px;top:374px;width:1px;height:17px;background:rgba(255,255,255,.55)"></div>
<div style="left:484px;top:374px;width:1px;height:17px;background:rgba(255,255,255,.55)"></div>
<div style="left:646px;top:374px;width:1px;height:17px;background:rgba(255,255,255,.55)"></div>
<div style="left:736px;top:374px;width:1px;height:17px;background:rgba(255,255,255,.55)"></div>
<div style="left:966px;top:374px;width:1px;height:17px;background:rgba(255,255,255,.55)"></div>
<div style="left:1138px;top:374px;width:1px;height:17px;background:rgba(255,255,255,.55)"></div>
<div style="left:160px;top:391px;width:12px;height:19px;background:linear-gradient(90deg,#fdfdfd,#dcdcdc);border:1px solid #7b7b7b"></div>
<div style="left:172px;top:392px;width:1166px;height:17px;background:#bccdee"></div>
<div class="cell" style="left:172px;top:392px;width:62px;text-align:right;padding-right:1px;color:#000">7981</div>
<div class="cell" style="left:236px;top:392px;width:76px;text-align:left;padding-left:2px;color:#000;letter-spacing:0.08px">01/01/2023</div>
<div class="cell" style="left:314px;top:392px;width:169px;text-align:left;padding-left:2px;color:#000;letter-spacing:-0.55px;word-spacing:1.500px">ANT</div>
<div class="cell" style="left:485px;top:392px;width:160px;text-align:left;padding-left:2px;color:#000;letter-spacing:-0.55px;word-spacing:1.500px">CUIDADOS UTI</div>
<div class="cell" style="left:647px;top:392px;width:88px;text-align:left;padding-left:2px;color:#000;letter-spacing:-0.55px;word-spacing:1.500px">IPASGO</div>
<div class="cell" style="left:737px;top:392px;width:228px;text-align:left;padding-left:2px;color:#000;letter-spacing:-0.55px;word-spacing:1.500px">MAR</div>
<div class="cell" style="left:1139px;top:392px;width:197px;text-align:left;padding-left:2px;color:#000;letter-spacing:-0.11px">Não Assinado/Pendente de Assinatura</div>
<div style="left:235px;top:392px;width:1px;height:17px;background:rgba(255,255,255,.35)"></div>
<div style="left:313px;top:392px;width:1px;height:17px;background:rgba(255,255,255,.35)"></div>
<div style="left:484px;top:392px;width:1px;height:17px;background:rgba(255,255,255,.35)"></div>
<div style="left:646px;top:392px;width:1px;height:17px;background:rgba(255,255,255,.35)"></div>
<div style="left:736px;top:392px;width:1px;height:17px;background:rgba(255,255,255,.35)"></div>
<div style="left:966px;top:392px;width:1px;height:17px;background:rgba(255,255,255,.35)"></div>
<div style="left:1138px;top:392px;width:1px;height:17px;background:rgba(255,255,255,.35)"></div>
<div style="left:160px;top:409px;width:12px;height:19px;background:linear-gradient(90deg,#fdfdfd,#dcdcdc);border:1px solid #7b7b7b"></div>
<div style="left:172px;top:410px;width:1166px;height:17px;background:#f3f5f3"></div>
<div class="cell" style="left:172px;top:410px;width:62px;text-align:right;padding-right:1px;color:#000">8077</div>
<div class="cell" style="left:236px;top:410px;width:76px;text-align:left;padding-left:2px;color:#000;letter-spacing:0.08px">02/01/2023</div>
<div class="cell" style="left:314px;top:410px;width:169px;text-align:left;padding-left:2px;color:#000;letter-spacing:-0.55px;word-spacing:1.500px">ANT</div>
<div class="cell" style="left:485px;top:410px;width:160px;text-align:left;padding-left:2px;color:#000;letter-spacing:-0.55px;word-spacing:1.500px">AVCI</div>
<div class="cell" style="left:647px;top:410px;width:88px;text-align:left;padding-left:2px;color:#000;letter-spacing:-0.55px;word-spacing:1.500px">IPASGO</div>
<div class="cell" style="left:737px;top:410px;width:228px;text-align:left;padding-left:2px;color:#000;letter-spacing:-0.55px;word-spacing:1.500px">DAN</div>
<div class="cell" style="left:1139px;top:410px;width:197px;text-align:left;padding-left:2px;color:#000;letter-spacing:-0.11px">Não Assinado/Pendente de Assinatura</div>
<div style="left:235px;top:410px;width:1px;height:17px;background:rgba(255,255,255,.35)"></div>
<div style="left:313px;top:410px;width:1px;height:17px;background:rgba(255,255,255,.35)"></div>
<div style="left:484px;top:410px;width:1px;height:17px;background:rgba(255,255,255,.35)"></div>
<div style="left:646px;top:410px;width:1px;height:17px;background:rgba(255,255,255,.35)"></div>
<div style="left:736px;top:410px;width:1px;height:17px;background:rgba(255,255,255,.35)"></div>
<div style="left:966px;top:410px;width:1px;height:17px;background:rgba(255,255,255,.35)"></div>
<div style="left:1138px;top:410px;width:1px;height:17px;background:rgba(255,255,255,.35)"></div>
<div style="left:160px;top:427px;width:12px;height:19px;background:linear-gradient(90deg,#fdfdfd,#dcdcdc);border:1px solid #7b7b7b"></div>
<div style="left:172px;top:428px;width:1166px;height:17px;background:#bccdee"></div>
<div class="cell" style="left:172px;top:428px;width:62px;text-align:right;padding-right:1px;color:#000">8055</div>
<div class="cell" style="left:236px;top:428px;width:76px;text-align:left;padding-left:2px;color:#000;letter-spacing:0.08px">02/01/2023</div>
<div class="cell" style="left:314px;top:428px;width:169px;text-align:left;padding-left:2px;color:#000;letter-spacing:-0.55px;word-spacing:1.500px">ANT</div>
<div class="cell" style="left:485px;top:428px;width:160px;text-align:left;padding-left:2px;color:#000;letter-spacing:-0.55px;word-spacing:1.500px">CONTROLE AVCI</div>
<div class="cell" style="left:647px;top:428px;width:88px;text-align:left;padding-left:2px;color:#000;letter-spacing:-0.55px;word-spacing:1.500px">IPASGO</div>
<div class="cell" style="left:737px;top:428px;width:228px;text-align:left;padding-left:2px;color:#000;letter-spacing:-0.55px;word-spacing:1.500px">DAN</div>
<div class="cell" style="left:1139px;top:428px;width:197px;text-align:left;padding-left:2px;color:#000;letter-spacing:-0.11px">Não Assinado/Pendente de Assinatura</div>
<div style="left:235px;top:428px;width:1px;height:17px;background:rgba(255,255,255,.35)"></div>
<div style="left:313px;top:428px;width:1px;height:17px;background:rgba(255,255,255,.35)"></div>
<div style="left:484px;top:428px;width:1px;height:17px;background:rgba(255,255,255,.35)"></div>
<div style="left:646px;top:428px;width:1px;height:17px;background:rgba(255,255,255,.35)"></div>
<div style="left:736px;top:428px;width:1px;height:17px;background:rgba(255,255,255,.35)"></div>
<div style="left:966px;top:428px;width:1px;height:17px;background:rgba(255,255,255,.35)"></div>
<div style="left:1138px;top:428px;width:1px;height:17px;background:rgba(255,255,255,.35)"></div>
<div style="left:160px;top:445px;width:12px;height:19px;background:linear-gradient(90deg,#fdfdfd,#dcdcdc);border:1px solid #7b7b7b"></div>
<div style="left:172px;top:446px;width:1166px;height:17px;background:#f3f5f3"></div>
<div class="cell" style="left:172px;top:446px;width:62px;text-align:right;padding-right:1px;color:#000">8280</div>
<div class="cell" style="left:236px;top:446px;width:76px;text-align:left;padding-left:2px;color:#000;letter-spacing:0.08px">04/01/2023</div>
<div class="cell" style="left:314px;top:446px;width:169px;text-align:left;padding-left:2px;color:#000;letter-spacing:-0.55px;word-spacing:1.500px">ANT</div>
<div class="cell" style="left:485px;top:446px;width:160px;text-align:left;padding-left:2px;color:#000;letter-spacing:-0.55px;word-spacing:1.500px">PNM?</div>
<div class="cell" style="left:647px;top:446px;width:88px;text-align:left;padding-left:2px;color:#000;letter-spacing:-0.55px;word-spacing:1.500px">IPASGO</div>
<div class="cell" style="left:737px;top:446px;width:228px;text-align:left;padding-left:2px;color:#000;letter-spacing:-0.55px;word-spacing:1.500px">JULI</div>
<div class="cell" style="left:1139px;top:446px;width:197px;text-align:left;padding-left:2px;color:#000;letter-spacing:-0.11px">Não Assinado/Pendente de Assinatura</div>
<div style="left:235px;top:446px;width:1px;height:17px;background:rgba(255,255,255,.35)"></div>
<div style="left:313px;top:446px;width:1px;height:17px;background:rgba(255,255,255,.35)"></div>
<div style="left:484px;top:446px;width:1px;height:17px;background:rgba(255,255,255,.35)"></div>
<div style="left:646px;top:446px;width:1px;height:17px;background:rgba(255,255,255,.35)"></div>
<div style="left:736px;top:446px;width:1px;height:17px;background:rgba(255,255,255,.35)"></div>
<div style="left:966px;top:446px;width:1px;height:17px;background:rgba(255,255,255,.35)"></div>
<div style="left:1138px;top:446px;width:1px;height:17px;background:rgba(255,255,255,.35)"></div>
<div style="left:160px;top:463px;width:12px;height:19px;background:linear-gradient(90deg,#fdfdfd,#dcdcdc);border:1px solid #7b7b7b"></div>
<div style="left:172px;top:464px;width:1166px;height:17px;background:#bccdee"></div>
<div class="cell" style="left:172px;top:464px;width:62px;text-align:right;padding-right:1px;color:#000">8089</div>
<div class="cell" style="left:236px;top:464px;width:76px;text-align:left;padding-left:2px;color:#000;letter-spacing:0.08px">02/01/2023</div>
<div class="cell" style="left:314px;top:464px;width:169px;text-align:left;padding-left:2px;color:#000;letter-spacing:-0.55px;word-spacing:1.500px">ANT</div>
<div class="cell" style="left:485px;top:464px;width:160px;text-align:left;padding-left:2px;color:#000;letter-spacing:-0.55px;word-spacing:1.500px">UTI</div>
<div class="cell" style="left:647px;top:464px;width:88px;text-align:left;padding-left:2px;color:#000;letter-spacing:-0.55px;word-spacing:1.500px">IPASGO</div>
<div class="cell" style="left:737px;top:464px;width:228px;text-align:left;padding-left:2px;color:#000;letter-spacing:-0.55px;word-spacing:1.500px">DAN</div>
<div class="cell" style="left:1139px;top:464px;width:197px;text-align:left;padding-left:2px;color:#000;letter-spacing:-0.11px">Não Assinado/Pendente de Assinatura</div>
<div style="left:235px;top:464px;width:1px;height:17px;background:rgba(255,255,255,.35)"></div>
<div style="left:313px;top:464px;width:1px;height:17px;background:rgba(255,255,255,.35)"></div>
<div style="left:484px;top:464px;width:1px;height:17px;background:rgba(255,255,255,.35)"></div>
<div style="left:646px;top:464px;width:1px;height:17px;background:rgba(255,255,255,.35)"></div>
<div style="left:736px;top:464px;width:1px;height:17px;background:rgba(255,255,255,.35)"></div>
<div style="left:966px;top:464px;width:1px;height:17px;background:rgba(255,255,255,.35)"></div>
<div style="left:1138px;top:464px;width:1px;height:17px;background:rgba(255,255,255,.35)"></div>
<div style="left:996px;top:312px;font-weight:bold;font-size:13px;letter-spacing:-0.1px;white-space:nowrap;line-height:15px">Pedidos</div>
<div style="left:336px;top:377px;width:134px;height:101px;background:linear-gradient(180deg,#99ade4 4.2%,#99ade4 12.5%,#aebbdb 20.8%,#aebbdb 29.2%,#c5c9d5 37.5%,#c5c9d5 45.8%,#b2bcd6 54.2%,#b2bcd6 62.5%,#c3c7d2 70.8%,#c3c7d2 79.2%,#a6b3d2 87.5%,#a6b3d2 95.8%);filter:blur(1.1px)"></div>
<div style="left:757px;top:375px;width:193px;height:103px;background:linear-gradient(180deg,#95aae3 4.2%,#95aae3 12.5%,#b0bddd 20.8%,#b0bddd 29.2%,#c7cbd8 37.5%,#c7cbd8 45.8%,#b3bdd8 54.2%,#b3bdd8 62.5%,#c4c8d3 70.8%,#c4c8d3 79.2%,#a4b1d1 87.5%,#a4b1d1 95.8%);filter:blur(1.1px)"></div>
<div style="left:880px;top:376px;width:70px;height:101px;background:linear-gradient(180deg,#93a9e4 4.2%,#93a9e4 12.5%,#bccdee 20.8%,#bccdee 29.2%,#e4e9f2 37.5%,#e4e9f2 45.8%,#bccdee 54.2%,#bccdee 62.5%,#dfe3ea 70.8%,#dfe3ea 79.2%,#b9c9ea 87.5%,#b9c9ea 95.8%);filter:blur(1px);-webkit-mask-image:linear-gradient(90deg,transparent,#000 70%);mask-image:linear-gradient(90deg,transparent,#000 70%)"></div>
<div class="circ" style="left:1342px;top:378px;width:40px;height:40px;">J</div>
<div class="orange" style="left:152px;top:512px;width:1020px;height:306px;"></div>
<div class="hdr" style="left:160px;top:537px;width:12px;height:21px;padding:0"></div>
<svg style="left:163px;top:544px" width="7" height="7" viewBox="0 0 7 7"><path d="M3.500 0 V7 M0 3.500 H7 M1 1 L6 6 M6 1 L1 6" stroke="#8a8a9a" stroke-width=".7"/></svg>
<div class="hdr" style="left:171px;top:537px;width:65px;height:21px;letter-spacing:-0.2px">Código</div>
<div class="hdr" style="left:235px;top:537px;width:163px;height:21px;">Nome do Exame</div>
<div class="hdr" style="left:397px;top:537px;width:164px;height:21px;">Categoria</div>
<div class="hdr" style="left:560px;top:537px;width:65px;height:21px;">Qtde</div>
<div class="hdr" style="left:624px;top:537px;width:72px;height:21px;letter-spacing:-0.45px">Código AMB</div>
<div class="hdr" style="left:695px;top:537px;width:84px;height:21px;letter-spacing:-0.63px">Código CBHPM</div>
<div class="hdr" style="left:778px;top:537px;width:70px;height:21px;letter-spacing:-0.2px">Cód. Oficial</div>
<div class="hdr" style="left:847px;top:537px;width:316px;height:21px;">Status</div>
<div style="left:160px;top:558px;width:12px;height:19px;background:linear-gradient(#fafafa,#dedede);border:1px solid #6a6a6a;border-top:none"></div>
<svg style="left:163px;top:564px" width="7" height="8" viewBox="0 0 7 8"><path d="M.5 .8 H6.500 L4.500 4 V7.300 H2.500 V4Z" fill="#f4f4f4" stroke="#4a4a5a" stroke-width=".9"/></svg>
<div style="left:172px;top:558px;width:991px;height:18px;background:#bccdee"></div>
<div class="t" style="left:566px;top:561px;width:200px;text-align:center;color:#7d8593;white-space:nowrap;letter-spacing:-0.15px">Clique aqui para definir um Filtro</div>
<div style="left:172px;top:576px;width:991px;height:6px;background:#e9ebee;border-top:1px solid #6a6a6a;border-bottom:1px solid #7a7a7a;border-right:1px solid #8a8a8a"></div>
<div style="left:160px;top:581px;width:12px;height:19px;background:linear-gradient(90deg,#fdfdfd,#dcdcdc);border:1px solid #7b7b7b"></div>
<svg style="left:163px;top:586px" width="6" height="8" viewBox="0 0 6 8"><path d="M1 .5 L5 4 L1 7.500" fill="none" stroke="#3c3c4a" stroke-width="1.500"/></svg>
<div style="left:172px;top:582px;width:990px;height:17px;background:#316ac5"></div>
<div style="left:172px;top:582px;width:63px;height:17px;background:#f3f5f3;outline:1px dotted #222;outline-offset:-1px"></div>
<div style="left:235px;top:581px;width:926px;height:19px;border:1px dotted #d9a86a"></div>
<div class="cell" style="left:172px;top:582px;width:62px;text-align:right;padding-right:1px;color:#000">43175</div>
<div class="cell" style="left:236px;top:582px;width:160px;text-align:left;padding-left:2px;color:#fff">Calcio</div>
<div class="cell" style="left:398px;top:582px;width:161px;text-align:left;padding-left:2px;color:#fff">Exames de Laboratório</div>
<div class="cell" style="left:561px;top:582px;width:62px;text-align:right;padding-right:1px;color:#fff">1</div>
<div class="cell" style="left:625px;top:582px;width:69px;text-align:left;padding-left:2px;color:#fff">28010337</div>
<div class="cell" style="left:696px;top:582px;width:81px;text-align:left;padding-left:2px;color:#fff">40301419</div>
<div class="cell" style="left:779px;top:582px;width:67px;text-align:left;padding-left:2px;color:#fff">40301419</div>
<div class="cell" style="left:848px;top:582px;width:313px;text-align:left;padding-left:2px;color:#fff;letter-spacing:-0.4px">SOLICITADO</div>
<div style="left:235px;top:582px;width:1px;height:17px;background:rgba(255,255,255,.55)"></div>
<div style="left:397px;top:582px;width:1px;height:17px;background:rgba(255,255,255,.55)"></div>
<div style="left:560px;top:582px;width:1px;height:17px;background:rgba(255,255,255,.55)"></div>
<div style="left:624px;top:582px;width:1px;height:17px;background:rgba(255,255,255,.55)"></div>
<div style="left:695px;top:582px;width:1px;height:17px;background:rgba(255,255,255,.55)"></div>
<div style="left:778px;top:582px;width:1px;height:17px;background:rgba(255,255,255,.55)"></div>
<div style="left:847px;top:582px;width:1px;height:17px;background:rgba(255,255,255,.55)"></div>
<div style="left:160px;top:599px;width:12px;height:19px;background:linear-gradient(90deg,#fdfdfd,#dcdcdc);border:1px solid #7b7b7b"></div>
<div style="left:172px;top:600px;width:990px;height:17px;background:#bccdee"></div>
<div class="cell" style="left:172px;top:600px;width:62px;text-align:right;padding-right:1px;color:#000">43176</div>
<div class="cell" style="left:236px;top:600px;width:160px;text-align:left;padding-left:2px;color:#000;letter-spacing:-0.33px">Coagulograma</div>
<div class="cell" style="left:398px;top:600px;width:161px;text-align:left;padding-left:2px;color:#000">Exames de Laboratório</div>
<div class="cell" style="left:561px;top:600px;width:62px;text-align:right;padding-right:1px;color:#000">1</div>
<div class="cell" style="left:625px;top:600px;width:69px;text-align:left;padding-left:2px;color:#000">28040139</div>
<div class="cell" style="left:696px;top:600px;width:81px;text-align:left;padding-left:2px;color:#000">40304922</div>
<div class="cell" style="left:779px;top:600px;width:67px;text-align:left;padding-left:2px;color:#000">40304922</div>
<div class="cell" style="left:848px;top:600px;width:313px;text-align:left;padding-left:2px;color:#000;letter-spacing:-0.4px">SOLICITADO</div>
<div style="left:235px;top:600px;width:1px;height:17px;background:rgba(255,255,255,.35)"></div>
<div style="left:397px;top:600px;width:1px;height:17px;background:rgba(255,255,255,.35)"></div>
<div style="left:560px;top:600px;width:1px;height:17px;background:rgba(255,255,255,.35)"></div>
<div style="left:624px;top:600px;width:1px;height:17px;background:rgba(255,255,255,.35)"></div>
<div style="left:695px;top:600px;width:1px;height:17px;background:rgba(255,255,255,.35)"></div>
<div style="left:778px;top:600px;width:1px;height:17px;background:rgba(255,255,255,.35)"></div>
<div style="left:847px;top:600px;width:1px;height:17px;background:rgba(255,255,255,.35)"></div>
<div style="left:160px;top:617px;width:12px;height:19px;background:linear-gradient(90deg,#fdfdfd,#dcdcdc);border:1px solid #7b7b7b"></div>
<div style="left:172px;top:618px;width:990px;height:17px;background:#f3f5f3"></div>
<div class="cell" style="left:172px;top:618px;width:62px;text-align:right;padding-right:1px;color:#000">43177</div>
<div class="cell" style="left:236px;top:618px;width:160px;text-align:left;padding-left:2px;color:#000">Creatinina</div>
<div class="cell" style="left:398px;top:618px;width:161px;text-align:left;padding-left:2px;color:#000">Exames de Laboratório</div>
<div class="cell" style="left:561px;top:618px;width:62px;text-align:right;padding-right:1px;color:#000">1</div>
<div class="cell" style="left:625px;top:618px;width:69px;text-align:left;padding-left:2px;color:#000">28010540</div>
<div class="cell" style="left:696px;top:618px;width:81px;text-align:left;padding-left:2px;color:#000">40301630</div>
<div class="cell" style="left:779px;top:618px;width:67px;text-align:left;padding-left:2px;color:#000">40301630</div>
<div class="cell" style="left:848px;top:618px;width:313px;text-align:left;padding-left:2px;color:#000;letter-spacing:-0.4px">SOLICITADO</div>
<div style="left:235px;top:618px;width:1px;height:17px;background:rgba(255,255,255,.35)"></div>
<div style="left:397px;top:618px;width:1px;height:17px;background:rgba(255,255,255,.35)"></div>
<div style="left:560px;top:618px;width:1px;height:17px;background:rgba(255,255,255,.35)"></div>
<div style="left:624px;top:618px;width:1px;height:17px;background:rgba(255,255,255,.35)"></div>
<div style="left:695px;top:618px;width:1px;height:17px;background:rgba(255,255,255,.35)"></div>
<div style="left:778px;top:618px;width:1px;height:17px;background:rgba(255,255,255,.35)"></div>
<div style="left:847px;top:618px;width:1px;height:17px;background:rgba(255,255,255,.35)"></div>
<div style="left:160px;top:635px;width:12px;height:19px;background:linear-gradient(90deg,#fdfdfd,#dcdcdc);border:1px solid #7b7b7b"></div>
<div style="left:172px;top:636px;width:990px;height:17px;background:#bccdee"></div>
<div class="cell" style="left:172px;top:636px;width:62px;text-align:right;padding-right:1px;color:#000">43178</div>
<div class="cell" style="left:236px;top:636px;width:160px;text-align:left;padding-left:2px;color:#000">Fosforo</div>
<div class="cell" style="left:398px;top:636px;width:161px;text-align:left;padding-left:2px;color:#000">Exames de Laboratório</div>
<div class="cell" style="left:561px;top:636px;width:62px;text-align:right;padding-right:1px;color:#000">1</div>
<div class="cell" style="left:625px;top:636px;width:69px;text-align:left;padding-left:2px;color:#000">28010892</div>
<div class="cell" style="left:696px;top:636px;width:81px;text-align:left;padding-left:2px;color:#000">40301931</div>
<div class="cell" style="left:779px;top:636px;width:67px;text-align:left;padding-left:2px;color:#000">40301931</div>
<div class="cell" style="left:848px;top:636px;width:313px;text-align:left;padding-left:2px;color:#000;letter-spacing:-0.4px">SOLICITADO</div>
<div style="left:235px;top:636px;width:1px;height:17px;background:rgba(255,255,255,.35)"></div>
<div style="left:397px;top:636px;width:1px;height:17px;background:rgba(255,255,255,.35)"></div>
<div style="left:560px;top:636px;width:1px;height:17px;background:rgba(255,255,255,.35)"></div>
<div style="left:624px;top:636px;width:1px;height:17px;background:rgba(255,255,255,.35)"></div>
<div style="left:695px;top:636px;width:1px;height:17px;background:rgba(255,255,255,.35)"></div>
<div style="left:778px;top:636px;width:1px;height:17px;background:rgba(255,255,255,.35)"></div>
<div style="left:847px;top:636px;width:1px;height:17px;background:rgba(255,255,255,.35)"></div>
<div style="left:160px;top:653px;width:12px;height:19px;background:linear-gradient(90deg,#fdfdfd,#dcdcdc);border:1px solid #7b7b7b"></div>
<div style="left:172px;top:654px;width:990px;height:17px;background:#f3f5f3"></div>
<div class="cell" style="left:172px;top:654px;width:62px;text-align:right;padding-right:1px;color:#000">43179</div>
<div class="cell" style="left:236px;top:654px;width:160px;text-align:left;padding-left:2px;color:#000">Hemograma</div>
<div class="cell" style="left:398px;top:654px;width:161px;text-align:left;padding-left:2px;color:#000">Exames de Laboratório</div>
<div class="cell" style="left:561px;top:654px;width:62px;text-align:right;padding-right:1px;color:#000">1</div>
<div class="cell" style="left:625px;top:654px;width:69px;text-align:left;padding-left:2px;color:#000">28040481</div>
<div class="cell" style="left:696px;top:654px;width:81px;text-align:left;padding-left:2px;color:#000">40304361</div>
<div class="cell" style="left:779px;top:654px;width:67px;text-align:left;padding-left:2px;color:#000">40304361</div>
<div class="cell" style="left:848px;top:654px;width:313px;text-align:left;padding-left:2px;color:#000;letter-spacing:-0.4px">SOLICITADO</div>
<div style="left:235px;top:654px;width:1px;height:17px;background:rgba(255,255,255,.35)"></div>
<div style="left:397px;top:654px;width:1px;height:17px;background:rgba(255,255,255,.35)"></div>
<div style="left:560px;top:654px;width:1px;height:17px;background:rgba(255,255,255,.35)"></div>
<div style="left:624px;top:654px;width:1px;height:17px;background:rgba(255,255,255,.35)"></div>
<div style="left:695px;top:654px;width:1px;height:17px;background:rgba(255,255,255,.35)"></div>
<div style="left:778px;top:654px;width:1px;height:17px;background:rgba(255,255,255,.35)"></div>
<div style="left:847px;top:654px;width:1px;height:17px;background:rgba(255,255,255,.35)"></div>
<div style="left:160px;top:671px;width:12px;height:19px;background:linear-gradient(90deg,#fdfdfd,#dcdcdc);border:1px solid #7b7b7b"></div>
<div style="left:172px;top:672px;width:990px;height:17px;background:#bccdee"></div>
<div class="cell" style="left:172px;top:672px;width:62px;text-align:right;padding-right:1px;color:#000">43180</div>
<div class="cell" style="left:236px;top:672px;width:160px;text-align:left;padding-left:2px;color:#000">Magnesio</div>
<div class="cell" style="left:398px;top:672px;width:161px;text-align:left;padding-left:2px;color:#000">Exames de Laboratório</div>
<div class="cell" style="left:561px;top:672px;width:62px;text-align:right;padding-right:1px;color:#000">1</div>
<div class="cell" style="left:625px;top:672px;width:69px;text-align:left;padding-left:2px;color:#000">28011120</div>
<div class="cell" style="left:696px;top:672px;width:81px;text-align:left;padding-left:2px;color:#000">40302237</div>
<div class="cell" style="left:779px;top:672px;width:67px;text-align:left;padding-left:2px;color:#000">40302237</div>
<div class="cell" style="left:848px;top:672px;width:313px;text-align:left;padding-left:2px;color:#000;letter-spacing:-0.4px">SOLICITADO</div>
<div style="left:235px;top:672px;width:1px;height:17px;background:rgba(255,255,255,.35)"></div>
<div style="left:397px;top:672px;width:1px;height:17px;background:rgba(255,255,255,.35)"></div>
<div style="left:560px;top:672px;width:1px;height:17px;background:rgba(255,255,255,.35)"></div>
<div style="left:624px;top:672px;width:1px;height:17px;background:rgba(255,255,255,.35)"></div>
<div style="left:695px;top:672px;width:1px;height:17px;background:rgba(255,255,255,.35)"></div>
<div style="left:778px;top:672px;width:1px;height:17px;background:rgba(255,255,255,.35)"></div>
<div style="left:847px;top:672px;width:1px;height:17px;background:rgba(255,255,255,.35)"></div>
<div style="left:160px;top:689px;width:12px;height:19px;background:linear-gradient(90deg,#fdfdfd,#dcdcdc);border:1px solid #7b7b7b"></div>
<div style="left:172px;top:690px;width:990px;height:17px;background:#f3f5f3"></div>
<div class="cell" style="left:172px;top:690px;width:62px;text-align:right;padding-right:1px;color:#000">43181</div>
<div class="cell" style="left:236px;top:690px;width:160px;text-align:left;padding-left:2px;color:#000;letter-spacing:-0.55px;word-spacing:1.500px">PCR</div>
<div class="cell" style="left:398px;top:690px;width:161px;text-align:left;padding-left:2px;color:#000">Exames de Laboratório</div>
<div class="cell" style="left:561px;top:690px;width:62px;text-align:right;padding-right:1px;color:#000">1</div>
<div class="cell" style="left:848px;top:690px;width:313px;text-align:left;padding-left:2px;color:#000;letter-spacing:-0.4px">SOLICITADO</div>
<div style="left:235px;top:690px;width:1px;height:17px;background:rgba(255,255,255,.35)"></div>
<div style="left:397px;top:690px;width:1px;height:17px;background:rgba(255,255,255,.35)"></div>
<div style="left:560px;top:690px;width:1px;height:17px;background:rgba(255,255,255,.35)"></div>
<div style="left:624px;top:690px;width:1px;height:17px;background:rgba(255,255,255,.35)"></div>
<div style="left:695px;top:690px;width:1px;height:17px;background:rgba(255,255,255,.35)"></div>
<div style="left:778px;top:690px;width:1px;height:17px;background:rgba(255,255,255,.35)"></div>
<div style="left:847px;top:690px;width:1px;height:17px;background:rgba(255,255,255,.35)"></div>
<div style="left:160px;top:707px;width:12px;height:19px;background:linear-gradient(90deg,#fdfdfd,#dcdcdc);border:1px solid #7b7b7b"></div>
<div style="left:172px;top:708px;width:990px;height:17px;background:#bccdee"></div>
<div class="cell" style="left:172px;top:708px;width:62px;text-align:right;padding-right:1px;color:#000">43182</div>
<div class="cell" style="left:236px;top:708px;width:160px;text-align:left;padding-left:2px;color:#000">Potassio</div>
<div class="cell" style="left:398px;top:708px;width:161px;text-align:left;padding-left:2px;color:#000">Exames de Laboratório</div>
<div class="cell" style="left:561px;top:708px;width:62px;text-align:right;padding-right:1px;color:#000">1</div>
<div class="cell" style="left:625px;top:708px;width:69px;text-align:left;padding-left:2px;color:#000">28011210</div>
<div class="cell" style="left:696px;top:708px;width:81px;text-align:left;padding-left:2px;color:#000">40302318</div>
<div class="cell" style="left:779px;top:708px;width:67px;text-align:left;padding-left:2px;color:#000">40302318</div>
<div class="cell" style="left:848px;top:708px;width:313px;text-align:left;padding-left:2px;color:#000;letter-spacing:-0.4px">SOLICITADO</div>
<div style="left:235px;top:708px;width:1px;height:17px;background:rgba(255,255,255,.35)"></div>
<div style="left:397px;top:708px;width:1px;height:17px;background:rgba(255,255,255,.35)"></div>
<div style="left:560px;top:708px;width:1px;height:17px;background:rgba(255,255,255,.35)"></div>
<div style="left:624px;top:708px;width:1px;height:17px;background:rgba(255,255,255,.35)"></div>
<div style="left:695px;top:708px;width:1px;height:17px;background:rgba(255,255,255,.35)"></div>
<div style="left:778px;top:708px;width:1px;height:17px;background:rgba(255,255,255,.35)"></div>
<div style="left:847px;top:708px;width:1px;height:17px;background:rgba(255,255,255,.35)"></div>
<div style="left:160px;top:725px;width:12px;height:19px;background:linear-gradient(90deg,#fdfdfd,#dcdcdc);border:1px solid #7b7b7b"></div>
<div style="left:172px;top:726px;width:990px;height:17px;background:#f3f5f3"></div>
<div class="cell" style="left:172px;top:726px;width:62px;text-align:right;padding-right:1px;color:#000">43183</div>
<div class="cell" style="left:236px;top:726px;width:160px;text-align:left;padding-left:2px;color:#000">Sodio</div>
<div class="cell" style="left:398px;top:726px;width:161px;text-align:left;padding-left:2px;color:#000">Exames de Laboratório</div>
<div class="cell" style="left:561px;top:726px;width:62px;text-align:right;padding-right:1px;color:#000">1</div>
<div class="cell" style="left:625px;top:726px;width:69px;text-align:left;padding-left:2px;color:#000">28011279</div>
<div class="cell" style="left:696px;top:726px;width:81px;text-align:left;padding-left:2px;color:#000">40302423</div>
<div class="cell" style="left:779px;top:726px;width:67px;text-align:left;padding-left:2px;color:#000">40302423</div>
<div class="cell" style="left:848px;top:726px;width:313px;text-align:left;padding-left:2px;color:#000;letter-spacing:-0.4px">SOLICITADO</div>
<div style="left:235px;top:726px;width:1px;height:17px;background:rgba(255,255,255,.35)"></div>
<div style="left:397px;top:726px;width:1px;height:17px;background:rgba(255,255,255,.35)"></div>
<div style="left:560px;top:726px;width:1px;height:17px;background:rgba(255,255,255,.35)"></div>
<div style="left:624px;top:726px;width:1px;height:17px;background:rgba(255,255,255,.35)"></div>
<div style="left:695px;top:726px;width:1px;height:17px;background:rgba(255,255,255,.35)"></div>
<div style="left:778px;top:726px;width:1px;height:17px;background:rgba(255,255,255,.35)"></div>
<div style="left:847px;top:726px;width:1px;height:17px;background:rgba(255,255,255,.35)"></div>
<div style="left:160px;top:743px;width:12px;height:19px;background:linear-gradient(90deg,#fdfdfd,#dcdcdc);border:1px solid #7b7b7b"></div>
<div style="left:172px;top:744px;width:990px;height:17px;background:#bccdee"></div>
<div class="cell" style="left:172px;top:744px;width:62px;text-align:right;padding-right:1px;color:#000">43184</div>
<div class="cell" style="left:236px;top:744px;width:160px;text-align:left;padding-left:2px;color:#000">Tgo</div>
<div class="cell" style="left:398px;top:744px;width:161px;text-align:left;padding-left:2px;color:#000">Exames de Laboratório</div>
<div class="cell" style="left:561px;top:744px;width:62px;text-align:right;padding-right:1px;color:#000">1</div>
<div class="cell" style="left:625px;top:744px;width:69px;text-align:left;padding-left:2px;color:#000">28011368</div>
<div class="cell" style="left:696px;top:744px;width:81px;text-align:left;padding-left:2px;color:#000">40302504</div>
<div class="cell" style="left:779px;top:744px;width:67px;text-align:left;padding-left:2px;color:#000">40302504</div>
<div class="cell" style="left:848px;top:744px;width:313px;text-align:left;padding-left:2px;color:#000;letter-spacing:-0.4px">SOLICITADO</div>
<div style="left:235px;top:744px;width:1px;height:17px;background:rgba(255,255,255,.35)"></div>
<div style="left:397px;top:744px;width:1px;height:17px;background:rgba(255,255,255,.35)"></div>
<div style="left:560px;top:744px;width:1px;height:17px;background:rgba(255,255,255,.35)"></div>
<div style="left:624px;top:744px;width:1px;height:17px;background:rgba(255,255,255,.35)"></div>
<div style="left:695px;top:744px;width:1px;height:17px;background:rgba(255,255,255,.35)"></div>
<div style="left:778px;top:744px;width:1px;height:17px;background:rgba(255,255,255,.35)"></div>
<div style="left:847px;top:744px;width:1px;height:17px;background:rgba(255,255,255,.35)"></div>
<div style="left:160px;top:761px;width:12px;height:19px;background:linear-gradient(90deg,#fdfdfd,#dcdcdc);border:1px solid #7b7b7b"></div>
<div style="left:172px;top:762px;width:990px;height:17px;background:#f3f5f3"></div>
<div class="cell" style="left:172px;top:762px;width:62px;text-align:right;padding-right:1px;color:#000">43185</div>
<div class="cell" style="left:236px;top:762px;width:160px;text-align:left;padding-left:2px;color:#000;letter-spacing:-0.55px;word-spacing:1.500px">TGP</div>
<div class="cell" style="left:398px;top:762px;width:161px;text-align:left;padding-left:2px;color:#000">Exames de Laboratório</div>
<div class="cell" style="left:561px;top:762px;width:62px;text-align:right;padding-right:1px;color:#000">1</div>
<div class="cell" style="left:625px;top:762px;width:69px;text-align:left;padding-left:2px;color:#000">21010021</div>
<div class="cell" style="left:696px;top:762px;width:81px;text-align:left;padding-left:2px;color:#000">40601200</div>
<div class="cell" style="left:779px;top:762px;width:67px;text-align:left;padding-left:2px;color:#000">40601200</div>
<div class="cell" style="left:848px;top:762px;width:313px;text-align:left;padding-left:2px;color:#000;letter-spacing:-0.4px">SOLICITADO</div>
<div style="left:235px;top:762px;width:1px;height:17px;background:rgba(255,255,255,.35)"></div>
<div style="left:397px;top:762px;width:1px;height:17px;background:rgba(255,255,255,.35)"></div>
<div style="left:560px;top:762px;width:1px;height:17px;background:rgba(255,255,255,.35)"></div>
<div style="left:624px;top:762px;width:1px;height:17px;background:rgba(255,255,255,.35)"></div>
<div style="left:695px;top:762px;width:1px;height:17px;background:rgba(255,255,255,.35)"></div>
<div style="left:778px;top:762px;width:1px;height:17px;background:rgba(255,255,255,.35)"></div>
<div style="left:847px;top:762px;width:1px;height:17px;background:rgba(255,255,255,.35)"></div>
<div style="left:160px;top:779px;width:12px;height:19px;background:linear-gradient(90deg,#fdfdfd,#dcdcdc);border:1px solid #7b7b7b"></div>
<div style="left:172px;top:780px;width:990px;height:17px;background:#bccdee"></div>
<div class="cell" style="left:172px;top:780px;width:62px;text-align:right;padding-right:1px;color:#000">43186</div>
<div class="cell" style="left:236px;top:780px;width:160px;text-align:left;padding-left:2px;color:#000">Ureia</div>
<div class="cell" style="left:398px;top:780px;width:161px;text-align:left;padding-left:2px;color:#000">Exames de Laboratório</div>
<div class="cell" style="left:561px;top:780px;width:62px;text-align:right;padding-right:1px;color:#000">1</div>
<div class="cell" style="left:625px;top:780px;width:69px;text-align:left;padding-left:2px;color:#000">28011414</div>
<div class="cell" style="left:696px;top:780px;width:81px;text-align:left;padding-left:2px;color:#000">40302580</div>
<div class="cell" style="left:779px;top:780px;width:67px;text-align:left;padding-left:2px;color:#000">40302580</div>
<div class="cell" style="left:848px;top:780px;width:313px;text-align:left;padding-left:2px;color:#000;letter-spacing:-0.4px">SOLICITADO</div>
<div style="left:235px;top:780px;width:1px;height:17px;background:rgba(255,255,255,.35)"></div>
<div style="left:397px;top:780px;width:1px;height:17px;background:rgba(255,255,255,.35)"></div>
<div style="left:560px;top:780px;width:1px;height:17px;background:rgba(255,255,255,.35)"></div>
<div style="left:624px;top:780px;width:1px;height:17px;background:rgba(255,255,255,.35)"></div>
<div style="left:695px;top:780px;width:1px;height:17px;background:rgba(255,255,255,.35)"></div>
<div style="left:778px;top:780px;width:1px;height:17px;background:rgba(255,255,255,.35)"></div>
<div style="left:847px;top:780px;width:1px;height:17px;background:rgba(255,255,255,.35)"></div>
<div style="left:964px;top:520px;font-weight:bold;font-size:13px;letter-spacing:-0.1px;white-space:nowrap;line-height:15px">Exames do Pedido</div>
<div class="circ" style="left:1170px;top:657px;width:40px;height:40px;">K</div>
<div class="orange" style="left:21px;top:808px;width:135px;height:82px;"></div>
<div class="btn" style="left:32px;top:815px;width:123px;height:34px;"></div>
<div class="ms" style="left:66px;top:819px;width:88px;text-align:center;line-height:13px">Visualizar<br>Resultado</div>
<svg style="left:37px;top:816px" width="26" height="31" viewBox="0 0 26 31"><path d="M1 3 L20 0.500 L25 5 V30 L3 31Z" fill="#ededed" stroke="#555" stroke-width="1"/><path d="M20 .5 V5 H25" fill="#cfcfcf" stroke="#555" stroke-width=".8"/><text x="12" y="9" font-size="4.500" font-weight="bold" text-anchor="middle" fill="#444" font-family="Liberation Sans,sans-serif" transform="rotate(-4 12 9)">ATESTADO</text><path d="M4 12 H22 M4 14.500 H22 M4 17 H22 M4 19.500 H16" stroke="#8a8a8a" stroke-width=".9"/><path d="M7 27 Q11 20 13 25 Q15 29 19 21 M12 28 L21 23" fill="none" stroke="#333" stroke-width=".9"/></svg>
<div class="btn" style="left:32px;top:852px;width:123px;height:34px;"></div>
<div class="ms" style="left:66px;top:856px;width:88px;text-align:center;line-height:13px">Informar<br>Resultado</div>
<svg style="left:35px;top:853px" width="28" height="32" viewBox="0 0 28 32"><path d="M7 1 L26 3 L23 31 L4 28Z" fill="#dfe9f5" stroke="#9db0c8" stroke-width=".8"/><path d="M10 4 L24 5.500 L23.300 10 L9.500 8.500Z" fill="#b9cde8"/><path d="M9 12 L22 13.500 M8.500 15 L21.500 16.500 M8 18 L21 19.500 M7.500 21 L17 22" stroke="#8fa4c0" stroke-width=".9"/><path d="M1 7 L5 8 L12 24 L9 25Z" fill="#2b2b2b"/><path d="M9 25 L12 24 L12.500 28Z" fill="#999"/></svg>
<div class="circ" style="left:155px;top:830px;width:40px;height:40px;">L</div>
<div style="left:28px;top:938px;width:1497px;height:4px;background:#c9c9c9"></div>
<div class="btn" style="left:30px;top:894px;width:135px;height:43px;"></div>
<div class="btn" style="left:168px;top:894px;width:134px;height:43px;"></div>
<div class="btn" style="left:305px;top:894px;width:135px;height:43px;"></div>
<div class="btn" style="left:443px;top:894px;width:135px;height:43px;"></div>
<div class="btn" style="left:581px;top:894px;width:135px;height:43px;"></div>
<div class="btn" style="left:719px;top:894px;width:135px;height:43px;"></div>
<div class="btn" style="left:857px;top:894px;width:135px;height:43px;"></div>
<div class="ms" style="left:45px;top:903px;width:120px;text-align:center;line-height:13px">Solicitar Entrada do<br>Paciente</div>
<div class="ms" style="left:175px;top:909.5px;width:120px;text-align:center;line-height:13px">Alertas</div>
<div class="ms" style="left:329px;top:909.5px;width:120px;text-align:center;line-height:13px">Internar</div>
<div class="ms" style="left:460px;top:909.5px;width:120px;text-align:center;line-height:13px">Enfermagem</div>
<div class="ms" style="left:605px;top:909.5px;width:120px;text-align:center;line-height:13px">Iniciar PA</div>
<div class="ms" style="left:727px;top:909.5px;width:120px;text-align:center;line-height:13px">Consulta Interativa</div>
<div class="ms" style="left:881px;top:896.5px;width:120px;text-align:center;line-height:13px">Exames de<br>Laboratórios<br>Externos</div>
<div style="left:565px;top:897px;width:1px;height:37px;background:#444"></div>
<svg style="left:567px;top:912px" width="9" height="5" viewBox="0 0 9 5"><path d="M0 0 H9 L4.500 5Z" fill="#111"/></svg>
<svg style="left:32px;top:907px" width="17" height="17" viewBox="0 0 17 17"><circle cx="6" cy="4.500" r="3.200" fill="#e9c49c"/><path d="M3 3.500 Q6 0 9 3.500 Q6 2.500 3 3.500Z" fill="#7a5a3a"/><path d="M.5 15 Q1 8.500 6 8.500 Q11 8.500 11.500 15Z" fill="#cfd6e0"/><path d="M12 15 V9 H9.500 L13 4 L16.500 9 H14 V15Z" fill="#3aa63a" stroke="#1f7a1f" stroke-width=".6"/></svg>
<svg style="left:306px;top:907px" width="33" height="24" viewBox="0 0 33 24"><defs><linearGradient id="bd1" x1="0" y1="0" x2="0" y2="1"><stop offset="0" stop-color="#fafafa"/><stop offset="1" stop-color="#c9cdd2"/></linearGradient></defs><path d="M15 7.500 L19.500 1 L29.500 3.800 L25 11Z" fill="url(#bd1)" stroke="#aeb3b9" stroke-width=".6"/><path d="M3 11.500 L14.500 7.500 L24 10.800 L11.500 15.500Z" fill="#3f70b8"/><path d="M3 11.500 L14.500 7.500 L17 8.400 L5.500 12.500Z" fill="#6d97d3"/><path d="M11.500 15.500 L25 11 L29.500 3.800 L31 5 V12 L26 17 L11.500 21Z" fill="#d9dce0" stroke="#a4a9b0" stroke-width=".5"/><path d="M2.500 11.500 L11.500 15.500 V21 L2.500 16.500Z" fill="#eceef0" stroke="#a4a9b0" stroke-width=".5"/><path d="M13.500 16.800 L15.500 16.200 V18 L13.500 18.600Z M17.500 15.600 L19.500 15 V16.800 L17.500 17.400Z M21.500 14.300 L23.500 13.700 V15.500 L21.500 16.100Z" fill="#4a78bd"/><path d="M1 9.500 L4 8.500 V13 L1 14Z" fill="#e7e9ec" stroke="#a4a9b0" stroke-width=".5"/><path d="M4 17.500 V20.500 M12.500 21 V23.500 M27 16.500 V20 M21 19 V21.500" stroke="#6b6f75" stroke-width="1.300"/><circle cx="4" cy="21" r="1" fill="#555"/><circle cx="12.500" cy="23" r="1" fill="#555"/><circle cx="27" cy="20" r="1" fill="#555"/></svg>
<svg style="left:449px;top:898px" width="24" height="33" viewBox="0 0 24 33"><defs><linearGradient id="nu1" x1="0" y1="0" x2="0" y2="1"><stop offset="0" stop-color="#ffffff"/><stop offset="1" stop-color="#c6c6c6"/></linearGradient><radialGradient id="nu2" cx=".4" cy=".4" r=".7"><stop offset="0" stop-color="#fde3c4"/><stop offset="1" stop-color="#e3a978"/></radialGradient></defs><path d="M15.500 10 Q22 14 20.500 19.500 Q17.500 18 15 14Z" fill="#8a5a38"/><path d="M1.500 30 Q1.500 20.500 8 19.500 L14.500 19.500 Q22 20.500 22 30 Q12 34.500 1.500 30Z" fill="url(#nu1)" stroke="#bcbcbc" stroke-width=".5"/><path d="M8.500 17 H14 V21 Q11 23 8.500 21Z" fill="#e5b184"/><ellipse cx="11" cy="12" rx="5" ry="6" fill="url(#nu2)"/><path d="M5.500 12 Q4.500 5.500 11 5.500 Q17.500 5.500 16.800 12.500 Q15.500 8.500 11 8.300 Q7 8.500 5.500 12Z" fill="#8a5a38"/><path d="M5 7.500 Q4.500 1.500 11 1.500 Q17.500 1.500 17 7.500 Q11 5.500 5 7.500Z" fill="#f6f6f6" stroke="#c4c4c4" stroke-width=".6"/></svg>
<svg style="left:582px;top:904px" width="33" height="27" viewBox="0 0 33 27"><path d="M9 4 L20 .8 L31 4 L20 7.500Z" fill="#fbfbfb" stroke="#b9b9b9" stroke-width=".5"/><path d="M10.500 3.800 L14 2.800 L16 3.500 L12.500 4.500Z M18 2 L21 1.300 L24 2.200 L21 3Z M17 5 L20 4.200 L22.500 5 L19.500 5.900Z" fill="#e02020"/><path d="M20 7.500 L31 4 V15.500 L20 20.500Z" fill="#f1f1f1" stroke="#b9b9b9" stroke-width=".5"/><path d="M9 4 L20 7.500 V13 L9 9.500Z" fill="#e4e4e4" stroke="#b9b9b9" stroke-width=".4"/><path d="M22.300 9.500 L25.500 8.400 V14 L22.300 15.200Z" fill="#2b2b2b"/><path d="M20 17.300 L31 12.500 V15.500 L20 20.500Z" fill="#e02020"/><path d="M22.500 16.300 L24.500 15.400 V18.500 L22.500 19.400Z M26.500 14.600 L28.500 13.700 V16.700 L26.500 17.600Z" fill="#f4f4f4"/><path d="M1.500 17 L8.500 9.500 L20 13 V20.500 L12 26 L1.500 22Z" fill="#f7f7f7" stroke="#b0b0b0" stroke-width=".5"/><path d="M4.500 14.300 L9 10 L17.500 12.800 L13.500 17.300Z" fill="#3a3f45"/><path d="M6 14 L9.300 10.800 L12 11.700 L8.500 15Z" fill="#7c858e"/><path d="M14.500 17.800 L19 13.500 V17.500 L14.500 20.500Z" fill="#3a3f45"/><path d="M12 22.800 L20 18 V20.500 L12 26Z" fill="#e02020"/><path d="M1.500 18.500 L12 22.500 V24 L1.500 20Z" fill="#55595e"/><path d="M2 20.200 L4 21 V22.300 L2 21.500Z M9 22.800 L11 23.600 V25 L9 24.200Z" fill="#f0a020"/><ellipse cx="15.300" cy="24" rx="2.500" ry="3" fill="#1c1c1c"/><ellipse cx="15" cy="24" rx="1" ry="1.300" fill="#c9c9c9"/><ellipse cx="28.300" cy="16.800" rx="2.200" ry="2.700" fill="#1c1c1c"/><ellipse cx="28" cy="16.800" rx=".9" ry="1.100" fill="#c9c9c9"/></svg>
<svg style="left:861px;top:901px" width="30" height="28" viewBox="0 0 30 28"><defs><linearGradient id="jr1" x1="0" y1="0" x2="1" y2="0"><stop offset="0" stop-color="#f6b400"/><stop offset=".45" stop-color="#fff0a0"/><stop offset="1" stop-color="#f0a800"/></linearGradient><linearGradient id="jr2" x1="0" y1="0" x2="0" y2="1"><stop offset="0" stop-color="#f04a55"/><stop offset="1" stop-color="#b8121e"/></linearGradient><linearGradient id="jr3" x1="0" y1="0" x2="0" y2="1"><stop offset="0" stop-color="#e9e9e9"/><stop offset="1" stop-color="#a9a9a9"/></linearGradient></defs><path d="M2 11 H17.500 L16.500 25 Q10 27.500 3.200 25Z" fill="#f4f4f4" stroke="#cfcfcf" stroke-width=".6"/><path d="M2.400 15 H17.200 L16.500 25 Q10 27.500 3.200 25Z" fill="url(#jr1)"/><path d="M0 7.500 Q0 5.200 9 5.200 Q18 5.200 18 7.500 V11.500 Q18 13.200 9 13.200 Q0 13.200 0 11.500Z" fill="url(#jr2)"/><ellipse cx="9" cy="7.500" rx="9" ry="2.200" fill="#f46a72"/><path d="M13.500 17 Q13.500 9.500 21.500 9.500 Q29.500 9.500 29.500 16.500 Q29.500 20.500 21.500 20.500 Q15 20.500 13.500 17Z" fill="url(#jr3)"/><circle cx="20.300" cy="5" r="3.600" fill="#f3d2ab"/><path d="M16.600 4.800 Q16.500 .5 20.300 .5 Q24.200 .5 24 5 Q22.500 2.800 20.300 2.800 Q18 2.800 16.600 4.800Z" fill="#8a5a2e"/></svg>
<div style="left:1342px;top:893px;width:183px;height:45px;background:#f0f0f0;border-left:1px solid #9a9a9a;border-top:1px solid #b0b0b0"></div>
<div style="left:1343px;top:894px;width:182px;height:18px;background:linear-gradient(#f8fafd,#dfe6f0);border-bottom:1px solid #c3cad6"></div>
<div style="left:1354px;top:897px;width:12px;height:12px;background:linear-gradient(135deg,#dfe5ee,#f8f9fb);border:1px solid #9a9ea4;box-shadow:inset 0 0 0 1px #f4f4f4"></div>
<svg style="left:1356px;top:899px" width="8" height="8" viewBox="0 0 8 8"><path d="M.9 3.200 L3.300 6.300 L7.200 .9" fill="none" stroke="#4a6a9e" stroke-width="2"/></svg>
<div class="ms" style="left:1371px;top:897px;white-space:nowrap;color:#1c3f94">Todas as Unidades</div>
<div class="dis ms" style="left:1348px;top:916px;width:174px;height:18px;">Hospital</div>
<svg style="left:1509px;top:924px" width="5" height="3" viewBox="0 0 5 3"><path d="M0 0 H5 L2.500 3Z" fill="#adadad"/></svg>
</body></html>
